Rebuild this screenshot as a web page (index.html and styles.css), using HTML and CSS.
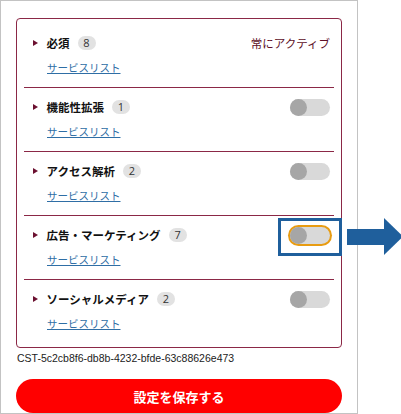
FILE: index.html
```html
<!DOCTYPE html>
<html lang="ja">
<head>
<meta charset="utf-8">
<link rel="stylesheet" href="styles.css">
</head>
<body>
<div class="frame">
  <div class="panel">
    <div class="row">
      <div class="head">
        <span class="caret"></span>
        <span class="title">必須</span>
        <span class="badge">8</span>
        <span class="always">常にアクティブ</span>
      </div>
      <a class="link" href="#">サービスリスト</a>
    </div>
    <div class="row">
      <div class="head">
        <span class="caret"></span>
        <span class="title">機能性拡張</span>
        <span class="badge">1</span>
        <span class="toggle"><span class="knob"></span></span>
      </div>
      <a class="link" href="#">サービスリスト</a>
    </div>
    <div class="row">
      <div class="head">
        <span class="caret"></span>
        <span class="title">アクセス解析</span>
        <span class="badge">2</span>
        <span class="toggle"><span class="knob"></span></span>
      </div>
      <a class="link" href="#">サービスリスト</a>
    </div>
    <div class="row">
      <div class="head">
        <span class="caret"></span>
        <span class="title">広告・マーケティング</span>
        <span class="badge">7</span>
        <span class="toggle focus"><span class="knob"></span>
          <span class="mark"></span>
          <svg class="arrow" width="56" height="37" viewBox="0 0 56 37"><rect x="0" y="11" width="38" height="16" fill="#1f5f9c"/><polygon points="37,0 56,18.5 37,37" fill="#1f5f9c"/></svg>
        </span>
      </div>
      <a class="link" href="#">サービスリスト</a>
    </div>
    <div class="row">
      <div class="head">
        <span class="caret"></span>
        <span class="title">ソーシャルメディア</span>
        <span class="badge">2</span>
        <span class="toggle"><span class="knob"></span></span>
      </div>
      <a class="link" href="#">サービスリスト</a>
    </div>
  </div>
  <div class="cid">CST-5c2cb8f6-db8b-4232-bfde-63c88626e473</div>
  <button class="save">設定を保存する</button>
</div>
</body>
</html>
```
FILE: styles.css
```css
html, body {
  margin: 0;
  padding: 0;
  background: #fff;
}
body {
  font-family: "Noto Sans CJK JP", "Noto Sans", sans-serif;
}
.frame {
  width: 358px;
  height: 414px;
  box-sizing: border-box;
  border: 1px solid #c3c3c3;
  padding: 17px 15px 0 15px;
}
.panel {
  border: 1px solid #8b2846;
  border-radius: 4px;
  padding: 5px 7px 4px 7px;
}
.row {
  padding: 10px 0 11px 0;
  display: flex;
  flex-direction: column;
  align-items: flex-start;
}
.row + .row {
  border-top: 1px solid #8b2846;
}
.head {
  align-self: stretch;
  display: flex;
  align-items: center;
  height: 18px;
  padding: 0 4px 0 9px;
}
.caret {
  width: 0;
  height: 0;
  border-top: 3.5px solid transparent;
  border-bottom: 3.5px solid transparent;
  border-left: 5.5px solid #6b1030;
  margin-right: 8.5px;
}
.title {
  font-size: 11.5px;
  font-weight: 700;
  color: #111;
  line-height: 18px;
}
.badge {
  margin-left: 8px;
  width: 18px;
  height: 14px;
  border-radius: 7px;
  background: #e2e2e2;
  color: #333;
  font-family: "Open Sans", "Noto Sans", sans-serif;
  font-size: 11px;
  line-height: 14px;
  text-align: center;
}
.always {
  margin-left: auto;
  font-size: 11.5px;
  color: #5e1028;
  line-height: 18px;
}
.toggle {
  margin-left: auto;
  position: relative;
  width: 40px;
  height: 17px;
  border-radius: 9px;
  background: #d9d9d9;
}
.knob {
  position: absolute;
  left: 0;
  top: 0;
  width: 17px;
  height: 17px;
  border-radius: 50%;
  background: #a6a6a6;
}
.toggle.focus {
  box-shadow: 0 0 0 2px #e89c12;
}
.mark {
  position: absolute;
  left: -12px;
  top: -9px;
  width: 64px;
  height: 38px;
  box-sizing: border-box;
  border: 3px solid #1f5f9c;
}
.arrow {
  position: absolute;
  left: 57px;
  top: -9px;
  display: block;
}
.link {
  margin-top: 8px;
  margin-left: 23px;
  font-size: 10.5px;
  line-height: 16px;
  color: #2f6ea5;
  text-decoration: underline;
}
.cid {
  margin-top: 3px;
  font-family: "Liberation Sans", Arial, sans-serif;
  font-size: 10.5px;
  line-height: 14px;
  color: #222;
  padding-left: 1px;
}
.save {
  display: block;
  margin-top: 14px;
  width: 100%;
  height: 34px;
  border: none;
  border-radius: 17px;
  background: #ff0000;
  color: #fff;
  font-family: "Noto Sans CJK JP", sans-serif;
  font-size: 13px;
  font-weight: 700;
  padding: 0;
}
```
